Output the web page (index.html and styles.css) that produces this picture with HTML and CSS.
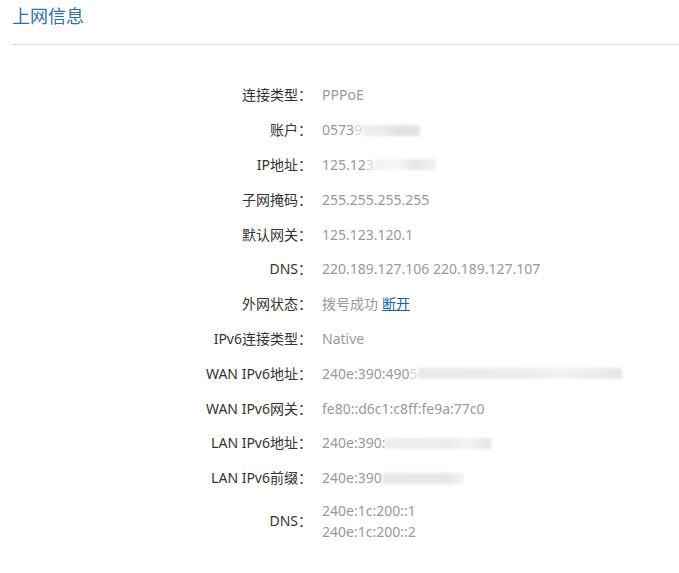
FILE: index.html
```html
<!DOCTYPE html>
<html lang="zh-CN">
<head>
<meta charset="utf-8">
<title>上网信息</title>
<link rel="stylesheet" href="styles.css">
</head>
<body>
<div class="page">
  <div class="header"><h2 class="title">上网信息</h2></div>
  <div class="info">
    <div class="row"><div class="label">连接类型：</div><div class="value">PPPoE</div></div>
    <div class="row"><div class="label">账户：</div><div class="value">0573<span class="part">9</span><span class="blur b1"></span></div></div>
    <div class="row"><div class="label">IP地址：</div><div class="value">125.12<span class="part">3</span><span class="blur b2"></span></div></div>
    <div class="row"><div class="label">子网掩码：</div><div class="value">255.255.255.255</div></div>
    <div class="row"><div class="label">默认网关：</div><div class="value">125.123.120.1</div></div>
    <div class="row"><div class="label">DNS：</div><div class="value">220.189.127.106 220.189.127.107</div></div>
    <div class="row"><div class="label">外网状态：</div><div class="value">拨号成功 <a class="link" href="#">断开</a></div></div>
    <div class="row"><div class="label">IPv6连接类型：</div><div class="value">Native</div></div>
    <div class="row"><div class="label">WAN IPv6地址：</div><div class="value">240e:390:490<span class="part">5</span><span class="blur b3"></span></div></div>
    <div class="row"><div class="label">WAN IPv6网关：</div><div class="value">fe80::d6c1:c8ff:fe9a:77c0</div></div>
    <div class="row"><div class="label">LAN IPv6地址：</div><div class="value">240e:390:<span class="blur b4"></span></div></div>
    <div class="row"><div class="label">LAN IPv6前缀：</div><div class="value">240e:390<span class="blur b5"></span></div></div>
    <div class="row row-multi"><div class="label">DNS：</div><div class="value multi"><div>240e:1c:200::1</div><div>240e:1c:200::2</div></div></div>
  </div>
</div>
</body>
</html>
```
FILE: styles.css
```css
html, body {
  margin: 0;
  padding: 0;
  background: #fff;
}
body {
  font-family: "Noto Sans", "Noto Sans CJK SC", sans-serif;
  font-size: 14px;
  color: #333;
}
.page {
  padding-left: 12px;
}
.header {
  border-bottom: 1px solid #dcdcdc;
  height: 44px;
}
.title {
  margin: 0;
  padding-top: 3px;
  font-size: 18px;
  font-weight: normal;
  line-height: 26px;
  color: #3470a8;
}
.info {
  padding-top: 33px;
}
.row {
  display: flex;
  align-items: center;
  height: 34.8px;
}
.label {
  width: 300px;
  text-align: right;
  color: #333;
  line-height: 20px;
}
.label-wide {
  letter-spacing: 0.2px;
}
.value {
  margin-left: 10px;
  color: #999;
  line-height: 20px;
  display: flex;
  align-items: center;
  white-space: nowrap;
}
.part {
  opacity: 0.45;
}
.blur {
  display: inline-block;
  height: 11px;
  background: #e6e6e6;
  filter: blur(1.5px);
}
.b1 { width: 58px; background: linear-gradient(90deg, #f0f0f0 0%, #eaeaea 40%, #e2e2e2 60%, #e4e4e4 100%); }
.b2 { width: 62px; background: linear-gradient(90deg, #f2f2f2 0%, #f6f6f6 40%, #e6e6e6 65%, #f0f0f0 100%); }
.b3 { width: 204px; background: linear-gradient(90deg, #e9e9e9 0%, #ececec 50%, #f2f2f2 70%, #e6e6e6 100%); }
.b4 { width: 106px; background: linear-gradient(90deg, #eeeeee 0%, #ebebeb 60%, #f4f4f4 80%, #e2e2e2 100%); }
.b5 { width: 82px; background: linear-gradient(90deg, #e8e8e8 0%, #e6e6e6 80%, #f4f4f4 100%); }
.link {
  color: #1f5fa8;
  text-decoration: underline;
  margin-left: 4px;
}
.row-multi {
  height: auto;
  padding: 4px 0 8px;
}
.multi {
  display: block;
  line-height: 21px;
}
```
